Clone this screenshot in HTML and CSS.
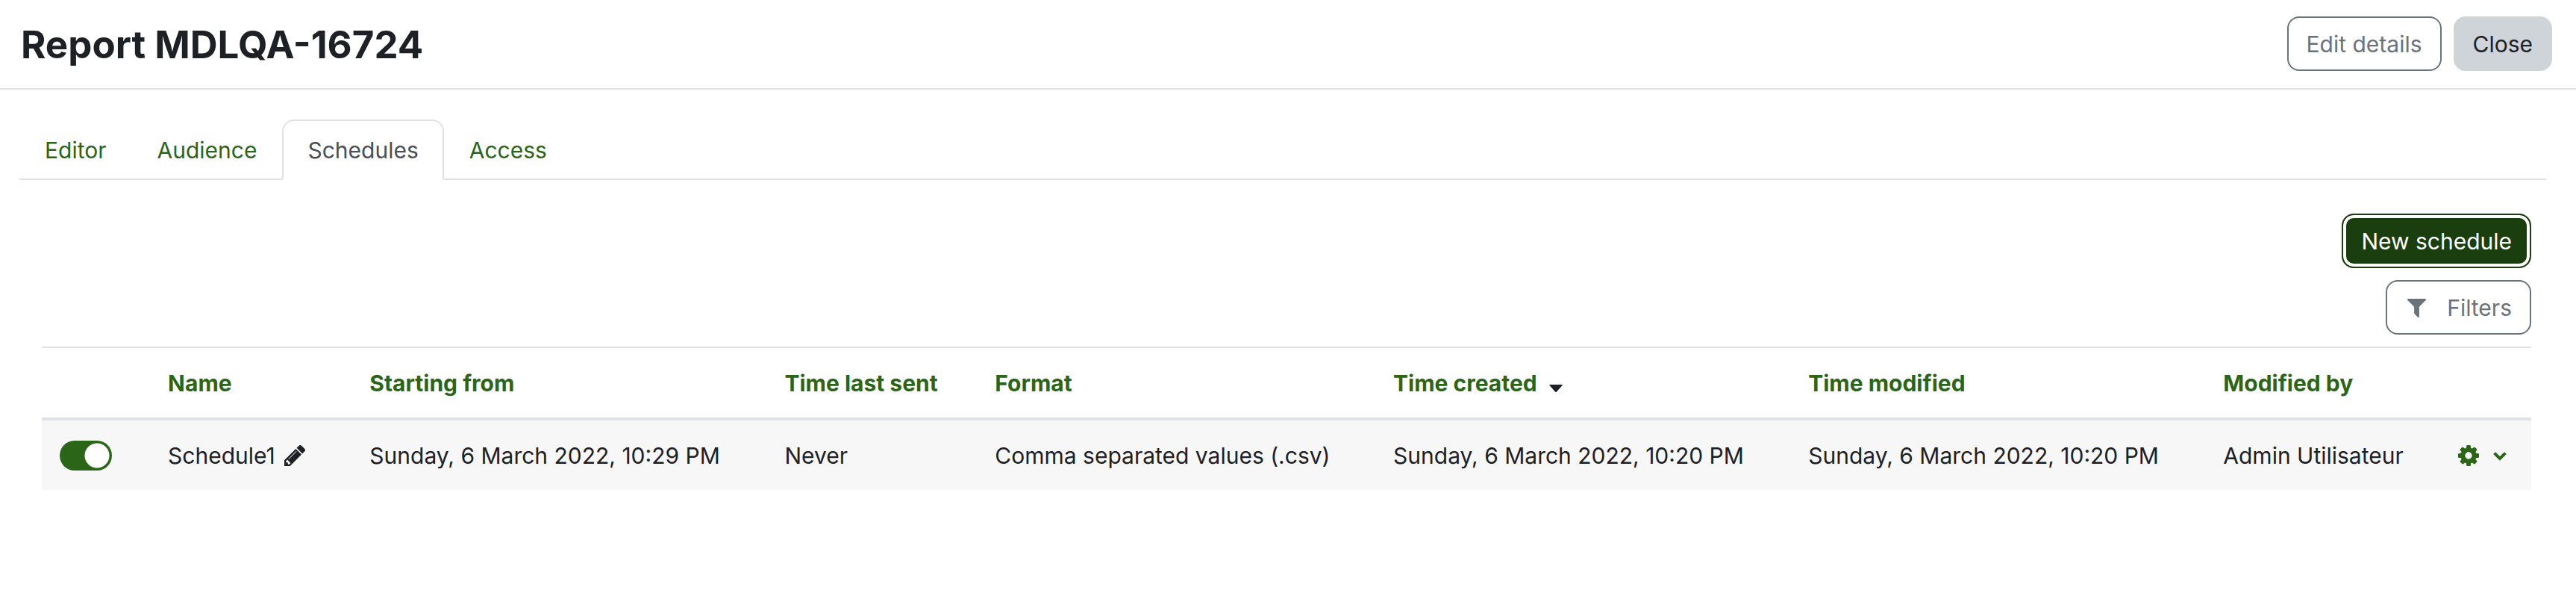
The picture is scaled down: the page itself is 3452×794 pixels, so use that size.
FILE: index.html
```html
<!DOCTYPE html>
<html lang="en">
<head>
<meta charset="utf-8">
<title>Report MDLQA-16724</title>
<link rel="stylesheet" href="styles.css">
</head>
<body>
<header class="page-header">
  <h1 class="page-title">Report MDLQA-16724</h1>
  <div class="header-actions">
    <button class="btn btn-outline" type="button">Edit details</button>
    <button class="btn btn-secondary" type="button">Close</button>
  </div>
</header>
<main class="content">
  <nav class="tabs" aria-label="Report sections">
    <a class="tab" href="#editor">Editor</a>
    <a class="tab" href="#audience">Audience</a>
    <a class="tab tab-active" href="#schedules" aria-current="page">Schedules</a>
    <a class="tab" href="#access">Access</a>
  </nav>
  <section class="panel">
    <div class="toolbar">
      <button class="btn btn-primary" type="button">New schedule</button>
      <button class="btn btn-outline btn-filters" type="button">
        <svg class="icon-filter" viewBox="0 0 1408 1408" aria-hidden="true"><path d="M1403 39q17 41-14 70L896 602v742q0 42-39 59-13 5-25 5-27 0-45-19l-256-256q-19-19-19-45V602L19 109q-31-29-14-70Q22 0 64 0h1280q42 0 59 39z"/></svg>
        <span>Filters</span>
      </button>
    </div>
    <table class="schedules">
      <colgroup>
        <col class="col-toggle"><col class="col-name"><col class="col-date"><col class="col-sent"><col class="col-format"><col class="col-date"><col class="col-date"><col class="col-user"><col class="col-actions">
      </colgroup>
      <thead>
        <tr>
          <td></td>
          <th scope="col"><a href="#name">Name</a></th>
          <th scope="col"><a href="#starting">Starting from</a></th>
          <th scope="col"><a href="#sent">Time last sent</a></th>
          <th scope="col"><a href="#format">Format</a></th>
          <th scope="col" aria-sort="descending"><a href="#created">Time created</a><svg class="icon-sort" viewBox="0 0 18 10" aria-hidden="true"><path d="M1 0h16q1 0 .6 1L10 9.500q-1 1-2 0L.4 1Q0 0 1 0z"/></svg></th>
          <th scope="col"><a href="#modified">Time modified</a></th>
          <th scope="col"><a href="#user">Modified by</a></th>
          <td></td>
        </tr>
      </thead>
      <tbody>
        <tr>
          <td class="control-cell"><input class="switch" type="checkbox" checked aria-label="Enable Schedule1"></td>
          <td>Schedule1<button class="icon-button" type="button" aria-label="Edit schedule name"><svg class="icon-pencil" viewBox="0 0 1515 1515" aria-hidden="true"><path d="M363 1387l91-91-235-235-91 91v107h128v128h107zM886 459q0-22-22-22-10 0-17 7L305 986q-7 7-7 17 0 22 22 22 10 0 17-7l542-542q7-7 7-17zM832 267l416 416-832 832H0v-416l832-832zm683 96q0 53-37 90l-166 166-416-416 166-165q36-38 90-38 53 0 91 38l235 234q37 39 37 91z"/></svg></button></td>
          <td>Sunday, 6 March 2022, 10:29 PM</td>
          <td>Never</td>
          <td>Comma separated values (.csv)</td>
          <td>Sunday, 6 March 2022, 10:20 PM</td>
          <td>Sunday, 6 March 2022, 10:20 PM</td>
          <td>Admin Utilisateur</td>
          <td class="control-cell"><button class="menu-button" type="button" aria-label="Schedule actions">
            <svg class="icon-gear" viewBox="0 0 1536 1536" aria-hidden="true"><path d="M1024 768q0-106-75-181t-181-75-181 75-75 181 75 181 181 75 181-75 75-181zm512-109v222q0 12-8 23t-20 13l-185 28q-19 54-39 91 35 50 107 138 10 12 10 25t-9 23q-27 37-99 108t-94 71q-12 0-26-9l-138-108q-44 23-91 38-16 136-29 186-7 28-36 28H657q-14 0-24.500-8.500T621 1506l-28-184q-49-16-90-37l-141 107q-10 9-25 9-14 0-25-11-126-114-165-168-7-10-7-23 0-12 8-23 15-21 51-66.500t54-70.500q-27-50-41-99L29 913q-13-2-21-12.500T0 877V655q0-12 8-23t19-13l186-28q14-46 39-92-40-57-107-138-10-12-10-24 0-10 9-23 26-36 98.500-107.500T337 135q13 0 26 10l138 107q44-23 91-38 16-136 29-186 7-28 36-28h222q14 0 24.500 8.500T915 30l28 184q49 16 90 37l142-107q9-9 24-9 13 0 25 10 129 119 165 170 7 8 7 22 0 12-8 23-15 21-51 66.500t-54 70.500q26 50 41 98l183 28q13 2 21 12.500t8 23.500z"/></svg>
            <svg class="icon-chevron" viewBox="0 0 16 12" aria-hidden="true"><path d="M2 4l6 6 6-6"/></svg>
          </button></td>
        </tr>
      </tbody>
    </table>
  </section>
</main>
</body>
</html>
```
FILE: styles.css
```css
* { box-sizing: border-box; }
body {
  margin: 0;
  background: #fff;
  color: #1d2125;
  font: 400 30px/45px Inter, "Liberation Sans", sans-serif;
}
a { color: #2b6618; text-decoration: none; }
button { font: inherit; cursor: pointer; }
svg { fill: currentColor; }

.page-header {
  display: flex;
  align-items: center;
  justify-content: space-between;
  padding: 22px 32px 23px 28px;
  border-bottom: 2px solid #dee2e6;
}
.page-title { margin: 0; padding-top: 2px; font-size: 51px; line-height: 60px; font-weight: 700; }
.header-actions { display: flex; gap: 16px; }

.btn {
  padding: 13px 24px 11px;
  border: 2px solid transparent;
  border-radius: 16px;
  line-height: 45px;
}
.btn-outline { background: #fff; border-color: #6a737b; color: #6a737b; }
.btn-secondary { background: #cfd4d8; border-color: #cfd4d8; color: #1d2125; }
.btn-primary {
  background: #1a3e0e;
  border-color: #1a3e0e;
  color: #fff;
  box-shadow: inset 0 0 0 4px #fff;
}
.btn-filters { display: flex; align-items: center; gap: 28px; padding-left: 27px; }

.content { padding: 40px 40px 0 26px; }
.tabs { display: flex; border-bottom: 2px solid #dee2e6; }
.tab {
  margin-bottom: -2px;
  padding: 17px 32px 15px;
  border: 2px solid transparent;
  border-radius: 16px 16px 0 0;
}
.tab-active { background: #fff; border-color: #dee2e6 #dee2e6 #fff; color: #495057; }

.panel { padding: 45px 20px 0 30px; }
.toolbar { display: flex; flex-direction: column; align-items: flex-end; gap: 16px; margin-bottom: 16px; }

.schedules { width: 100%; table-layout: fixed; border-collapse: separate; border-spacing: 0; }
.schedules th, .schedules td { padding: 25px 24px 23px; text-align: left; white-space: nowrap; }
.schedules .control-cell { padding: 24px; }
.schedules thead th, .schedules thead td { border-top: 2px solid #dee2e6; border-bottom: 4px solid #dee2e6; }
.schedules th { font-weight: 700; }
.schedules tbody td { background: #f7f7f7; }
.col-toggle { width: 4.35%; }
.col-name { width: 8.1%; }
.col-date { width: 16.67%; }
.col-sent { width: 8.45%; }
.col-format { width: 16%; }
.col-user { width: 9.42%; }

.switch {
  appearance: none;
  display: block;
  width: 70px;
  height: 40px;
  margin: 0;
  border-radius: 20px;
  background: radial-gradient(circle at 50px 20px, #fff 16px, #2b6618 17px);
}
.icon-button, .menu-button { padding: 0; border: 0; background: none; color: inherit; }
.icon-button { margin-left: 12px; }
.menu-button { display: flex; align-items: center; gap: 20px; color: #2b6618; }
.icon-filter { width: 25px; height: 25px; }
.icon-pencil { width: 28px; height: 28px; vertical-align: -3px; }
.icon-gear { width: 28px; height: 28px; }
.icon-chevron { width: 16px; height: 12px; overflow: visible; fill: none; stroke: currentColor; stroke-width: 4px; stroke-linecap: square; }
.icon-sort { width: 18px; height: 10px; margin-left: 16px; vertical-align: -1px; }
```
